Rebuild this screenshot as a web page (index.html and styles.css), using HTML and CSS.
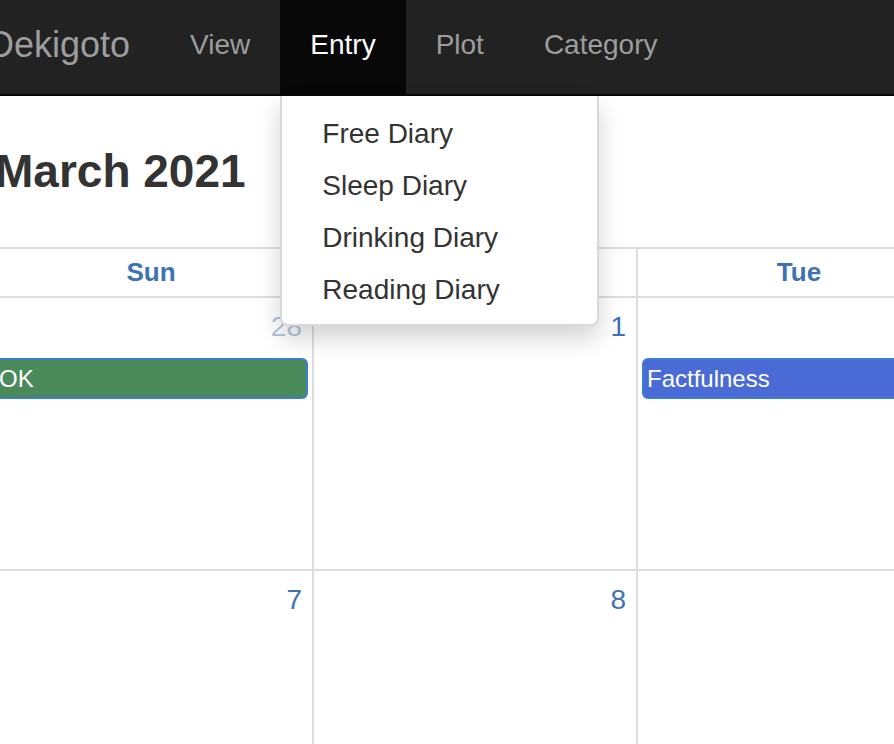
FILE: index.html
```html
<!DOCTYPE html>
<html lang="en">
<head>
<meta charset="utf-8">
<title>Dekigoto</title>
<link rel="stylesheet" href="styles.css">
</head>
<body>
<nav class="navbar">
  <div class="nav-inner">
    <a class="brand" href="#">Dekigoto</a>
    <ul class="nav">
      <li><a href="#">View</a></li>
      <li class="open">
        <a href="#" class="active">Entry</a>
        <ul class="dropdown">
          <li><a href="#">Free Diary</a></li>
          <li><a href="#">Sleep Diary</a></li>
          <li><a href="#">Drinking Diary</a></li>
          <li><a href="#">Reading Diary</a></li>
        </ul>
      </li>
      <li><a href="#">Plot</a></li>
      <li><a href="#">Category</a></li>
    </ul>
  </div>
</nav>

<main class="page">
  <h2 class="title">March 2021</h2>
  <div class="calendar">
    <div class="head-row">
      <div class="hcell">Sun</div>
      <div class="hcell">Mon</div>
      <div class="hcell">Tue</div>
    </div>
    <div class="week">
      <div class="day other">
        <div class="num">28</div>
        <div class="event green">OK</div>
      </div>
      <div class="day">
        <div class="num">1</div>
      </div>
      <div class="day">
        <div class="num">2</div>
        <div class="event blue">Factfulness</div>
      </div>
    </div>
    <div class="week">
      <div class="day"><div class="num">7</div></div>
      <div class="day"><div class="num">8</div></div>
      <div class="day"><div class="num">9</div></div>
    </div>
  </div>
</main>
</body>
</html>
```

FILE: styles.css
```css
html, body {
  margin: 0;
  padding: 0;
  background: #fff;
  overflow: hidden;
  width: 894px;
  height: 744px;
}
body {
  font-family: "Liberation Sans", Arial, Helvetica, sans-serif;
  color: #333;
}
a { text-decoration: none; }

.navbar {
  background: #222;
  height: 94px;
  border-bottom: 2px solid #080808;
  position: relative;
  z-index: 10;
}
.nav-inner {
  display: flex;
  height: 94px;
  margin-left: -42px;
}
.brand {
  display: flex;
  align-items: center;
  padding: 0 30px 4px;
  font-size: 36px;
  color: #9d9d9d;
}
.nav {
  display: flex;
  list-style: none;
  margin: 0;
  padding: 0;
}
.nav > li {
  position: relative;
  display: flex;
}
.nav > li > a {
  display: flex;
  align-items: center;
  padding: 0 30px 4px;
  font-size: 28px;
  color: #9d9d9d;
}
.nav > li > a.active {
  background: #080808;
  color: #fff;
}

.dropdown {
  position: absolute;
  top: 96px;
  left: 0;
  width: 319px;
  box-sizing: border-box;
  margin: 0;
  padding: 12px 0 8px;
  list-style: none;
  background: #fff;
  border: 2px solid rgba(0, 0, 0, 0.15);
  border-top: 0;
  border-radius: 0 0 8px 8px;
  box-shadow: 0 12px 24px rgba(0, 0, 0, 0.175);
}
.dropdown a {
  display: block;
  padding: 6px 40px;
  line-height: 40px;
  font-size: 28px;
  color: #333;
  white-space: nowrap;
}

.page {
  margin-left: -12px;
}
.title {
  margin: 51px 0 52px 7px;
  font-size: 46px;
  line-height: 48px;
  font-weight: bold;
  color: #333;
}
.calendar {
  width: 2268px;
}
.head-row, .week {
  display: grid;
  grid-template-columns: repeat(3, 324px);
}
.head-row {
  border-top: 2px solid #ddd;
  border-bottom: 2px solid #ddd;
}
.hcell {
  height: 47px;
  line-height: 47px;
  text-align: center;
  font-size: 26px;
  font-weight: bold;
  color: #3d73b5;
  border-left: 2px solid #ddd;
}
.week {
  border-bottom: 2px solid #ddd;
}
.day {
  border-left: 2px solid #ddd;
  padding-top: 13px;
  box-sizing: border-box;
  height: 271px;
}
.num {
  text-align: right;
  padding-right: 10px;
  font-size: 28px;
  line-height: 31px;
  color: #3d73b5;
}
.day.other .num {
  opacity: 0.4;
}
.event {
  margin: 16px 4px 0 4px;
  height: 41px;
  box-sizing: border-box;
  border: 2px solid #3c7dd4;
  border-radius: 6px;
  padding: 0 3px;
  font-size: 24px;
  line-height: 37px;
  color: #fff;
  white-space: nowrap;
  overflow: hidden;
}
.event.green {
  background: #4a8a5a;
}
.event.blue {
  background: #4a6bd6;
  margin-right: -40px;
}
```
